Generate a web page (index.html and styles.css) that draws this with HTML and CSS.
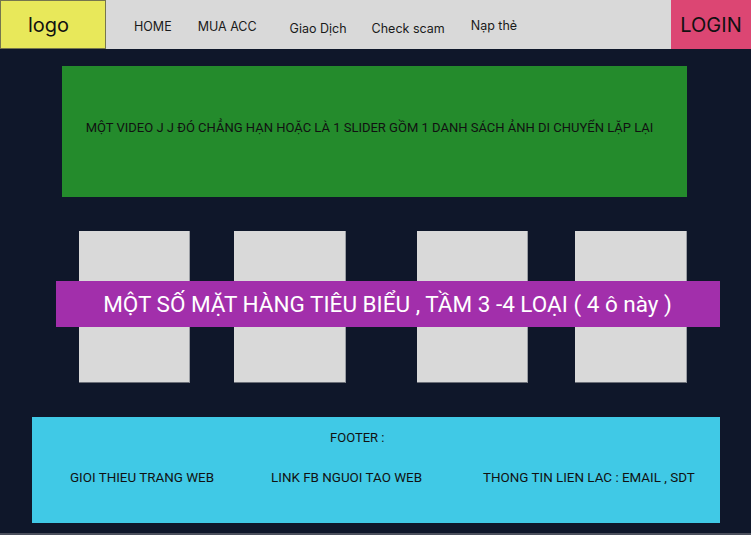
FILE: index.html
```html
<!DOCTYPE html>
<html lang="vi">
<head>
<meta charset="utf-8">
<title>Shop</title>
<link rel="stylesheet" href="styles.css">
</head>
<body>
<header class="topbar">
  <div class="logo">logo</div>
  <nav class="nav">
    <a class="nav-item nav-home">HOME</a>
    <a class="nav-item nav-mua">MUA ACC</a>
    <a class="nav-item nav-giao">Giao Dịch</a>
    <a class="nav-item nav-check">Check scam</a>
    <a class="nav-item nav-nap">Nạp thẻ</a>
  </nav>
  <div class="login">LOGIN</div>
</header>
<main class="content">
  <section class="hero">MỘT VIDEO J J ĐÓ CHẲNG HẠN HOẶC LÀ 1 SLIDER GỒM 1 DANH SÁCH ẢNH DI CHUYỂN LẶP LẠI</section>
  <section class="products">
    <div class="cards">
      <div class="card card-1"></div>
      <div class="card card-2"></div>
      <div class="card card-3"></div>
      <div class="card card-4"></div>
    </div>
    <div class="banner">MỘT SỐ MẶT HÀNG TIÊU BIỂU , TẦM 3 -4 LOẠI ( 4 ô này )</div>
  </section>
  <footer class="footer">
    <div class="footer-title">FOOTER :</div>
    <div class="footer-row">
      <span class="f-item f-1">GIOI THIEU TRANG WEB</span>
      <span class="f-item f-2">LINK FB NGUOI TAO WEB</span>
      <span class="f-item f-3">THONG TIN LIEN LAC : EMAIL , SDT</span>
    </div>
  </footer>
</main>
</body>
</html>
```
FILE: styles.css
```css
* { box-sizing: border-box; }
html, body { margin: 0; padding: 0; }
body {
  width: 751px;
  height: 535px;
  overflow: hidden;
  background: #0f172a;
  font-family: Roboto, "Liberation Sans", sans-serif;
  color: #111;
  border-bottom: 2px solid #4a4f5c;
}
.topbar {
  display: flex;
  height: 49px;
  background: #d9d9d9;
}
.logo {
  width: 106px;
  height: 49px;
  background: #e8e85a;
  border: 1px solid #76764e;
  display: flex;
  align-items: center;
  padding-left: 27px;
  font-family: Inter, "Liberation Sans", sans-serif;
  font-size: 20px;
  color: #111;
}
.nav {
  flex: 1;
  display: flex;
  align-items: center;
  padding-left: 28px;
  font-family: Inter, "Liberation Sans", sans-serif;
  font-size: 12.5px;
  color: #1a1a1a;
}
.nav-item { white-space: nowrap; }
.nav-home { margin-top: 3px; }
.nav-mua { margin-left: 26px; margin-top: 3px; }
.nav-giao { margin-left: 33px; margin-top: 7px; }
.nav-check { margin-left: 25px; margin-top: 7px; }
.nav-nap { margin-left: 26px; margin-top: 1px; }
.login {
  width: 80px;
  background: #dc4673;
  display: flex;
  align-items: center;
  justify-content: center;
  font-family: Inter, "Liberation Sans", sans-serif;
  font-size: 20px;
  color: #111;
}
.content {
  display: flex;
  flex-direction: column;
}
.hero {
  margin: 17px 0 0 62px;
  width: 625px;
  height: 131px;
  background: #248b2c;
  display: flex;
  align-items: center;
  justify-content: center;
  font-size: 13px;
  color: #111;
  padding-bottom: 8px;
  padding-right: 10px;
}
.products {
  position: relative;
  margin-top: 34px;
  height: 152px;
}
.cards {
  display: flex;
  padding-left: 79px;
}
.card {
  width: 112px;
  height: 152px;
  background: #d9d9d9;
  border-bottom: 1px solid #6b6f78;
  border-right: 1px solid #9a9da3;
}
.card-1 { width: 111px; }
.card-2 { margin-left: 44px; }
.card-3 { margin-left: 71px; width: 111px; }
.card-4 { margin-left: 47px; }
.banner {
  position: absolute;
  left: 56px;
  top: 50px;
  width: 664px;
  height: 46px;
  background: #a22fab;
  color: #fff;
  display: flex;
  align-items: center;
  justify-content: center;
  font-size: 22.5px;
  padding-left: 0;
  padding-right: 1px;
}
.footer {
  margin: 34px 0 0 32px;
  width: 688px;
  height: 106px;
  background: #40c9e6;
  font-size: 13px;
  color: #111;
  display: flex;
  flex-direction: column;
}
.footer-title {
  margin-top: 13px;
  padding-left: 298px;
  line-height: 16px;
}
.footer-row {
  display: flex;
  margin-top: 24px;
  padding-left: 38px;
  line-height: 16px;
  font-size: 13.4px;
}
.f-2 { margin-left: 57px; }
.f-3 { margin-left: 61px; }
```
